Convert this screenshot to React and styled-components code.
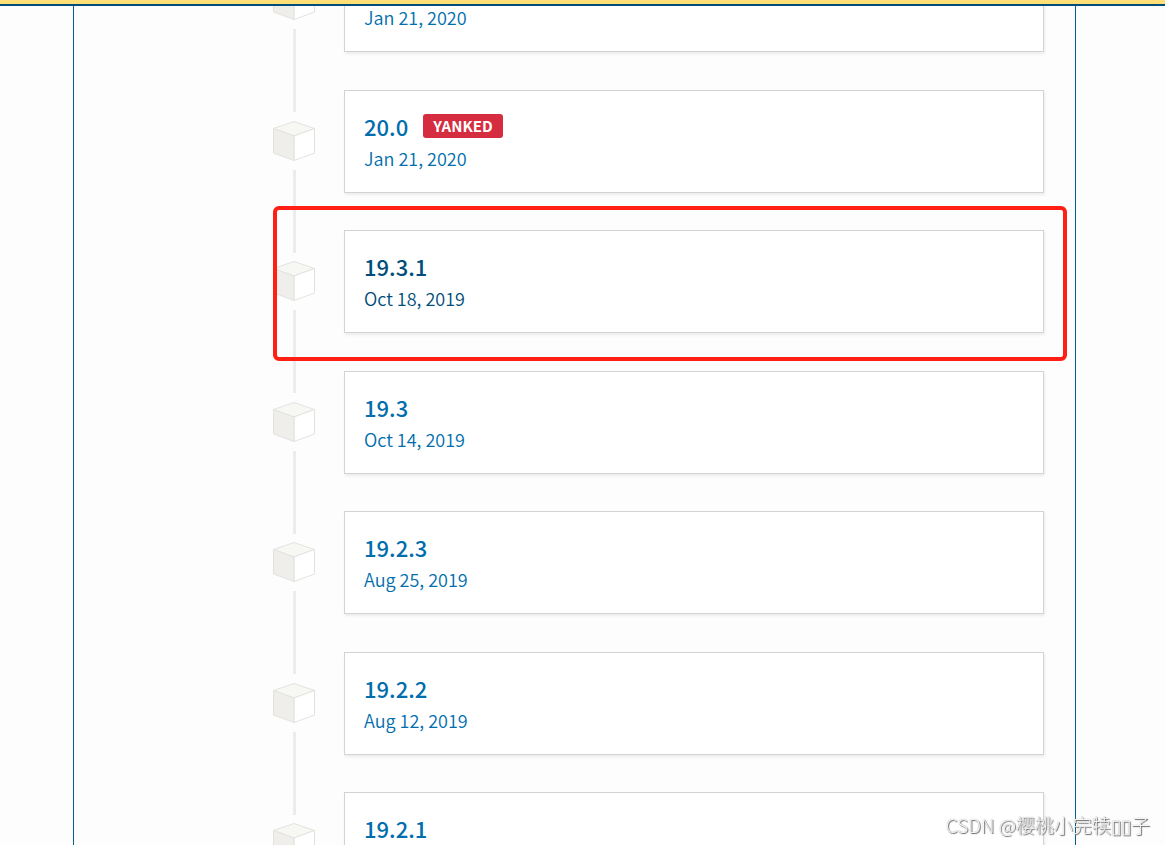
import React from 'react';
import styled, { createGlobalStyle } from 'styled-components';

const GlobalStyle = createGlobalStyle`
  * {
    box-sizing: border-box;
  }

  body {
    margin: 0;
    background-color: #fdfdfd;
    font-family: 'Source Sans Pro', 'Noto Sans CJK SC', sans-serif;
  }
`;

const Page = styled.div`
  display: flex;
  flex-direction: column;
  height: 100vh;
  overflow: hidden;
`;

const TopBar = styled.header`
  flex: none;
  height: 6px;
  background-color: #ffdf76;
  border-bottom: 2px solid #004d7a;
`;

const Content = styled.main`
  flex: 1;
  min-height: 0;
  margin: 0 89px 0 73px;
  padding: 0 31px 0 199px;
  border-left: 1px solid #006090;
  border-right: 1px solid #006090;
  overflow: hidden;
`;

const Timeline = styled.ol`
  margin: -57px 0 0;
  padding: 0;
  list-style: none;
`;

const Release = styled.li`
  position: relative;
  display: flex;
  gap: 29px;
  margin-bottom: 38px;

  &:nth-child(even) {
    margin-bottom: 37px;
  }
`;

const Rail = styled.div`
  display: flex;
  flex-direction: column;
  align-items: center;
  gap: 9px;
  width: 42px;
  margin: 31px 0 -60px;
`;

const Line = styled.div`
  flex: 1;
  width: 3px;
  background-color: #ececec;
`;

const Card = styled.a`
  flex: 1;
  height: 103px;
  padding: 20px 19px;
  background-color: #fff;
  border: 1px solid #d3d3d3;
  box-shadow: 1px 2px 3px rgba(0, 0, 0, 0.07);
  color: ${({ $active }) => ($active ? '#004d7a' : '#006dad')};
  text-decoration: none;
`;

const Version = styled.p`
  display: flex;
  align-items: center;
  gap: 15px;
  margin: 0;
  font-size: 22px;
  font-weight: 500;
  line-height: 30px;
`;

const Badge = styled.span`
  padding: 0 10px;
  background-color: #d52c40;
  border-radius: 3px;
  color: #fff;
  font-size: 15px;
  font-weight: 700;
  line-height: 24px;
`;

const ReleaseDate = styled.time`
  display: block;
  font-size: 18px;
  font-weight: 350;
  line-height: 34px;
`;

const Highlight = styled.div`
  position: absolute;
  top: -24px;
  right: -23px;
  bottom: -28px;
  left: 0;
  border: 4px solid #ff1f14;
  border-radius: 6px;
  pointer-events: none;
`;

const Watermark = styled.div`
  position: fixed;
  right: 15px;
  bottom: 6px;
  color: #f4f4f4;
  font-family: 'Noto Sans CJK SC', sans-serif;
  font-size: 19px;
  font-weight: 300;
  line-height: 28px;
  text-shadow: 1px 1px 1px #666, 0 0 1px #999;
  white-space: nowrap;
`;

const releases = [
  { version: '20.0.1', date: 'Jan 21, 2020' },
  { version: '20.0', date: 'Jan 21, 2020', yanked: true },
  { version: '19.3.1', date: 'Oct 18, 2019', active: true },
  { version: '19.3', date: 'Oct 14, 2019' },
  { version: '19.2.3', date: 'Aug 25, 2019' },
  { version: '19.2.2', date: 'Aug 12, 2019' },
  { version: '19.2.1', date: 'Jul 23, 2019' },
];

function Cube() {
  return (
    <svg width="42" height="40" viewBox="0 0 42 40" stroke="#e2e2df" strokeLinejoin="round" aria-hidden="true">
      <path d="M0.5 7.5L21 0.5L41.5 7.5L21 15Z" fill="#f7f7f4" />
      <path d="M41.5 7.5L21 15V39.5L41.5 32Z" fill="#fff" />
      <path d="M0.5 7.5L21 15V39.5L0.5 32Z" fill="#efeeea" />
    </svg>
  );
}

export default function App() {
  return (
    <>
      <GlobalStyle />
      <Page>
        <TopBar />
        <Content>
          <Timeline>
            {releases.map(({ version, date, yanked, active }) => (
              <Release key={version}>
                <Rail>
                  <Cube />
                  <Line />
                </Rail>
                <Card href={`#${version}`} $active={active}>
                  <Version>
                    {version}
                    {yanked && <Badge>YANKED</Badge>}
                  </Version>
                  <ReleaseDate>{date}</ReleaseDate>
                </Card>
                {active && <Highlight />}
              </Release>
            ))}
          </Timeline>
        </Content>
        <Watermark>CSDN @樱桃小完犊▯▯子</Watermark>
      </Page>
    </>
  );
}
